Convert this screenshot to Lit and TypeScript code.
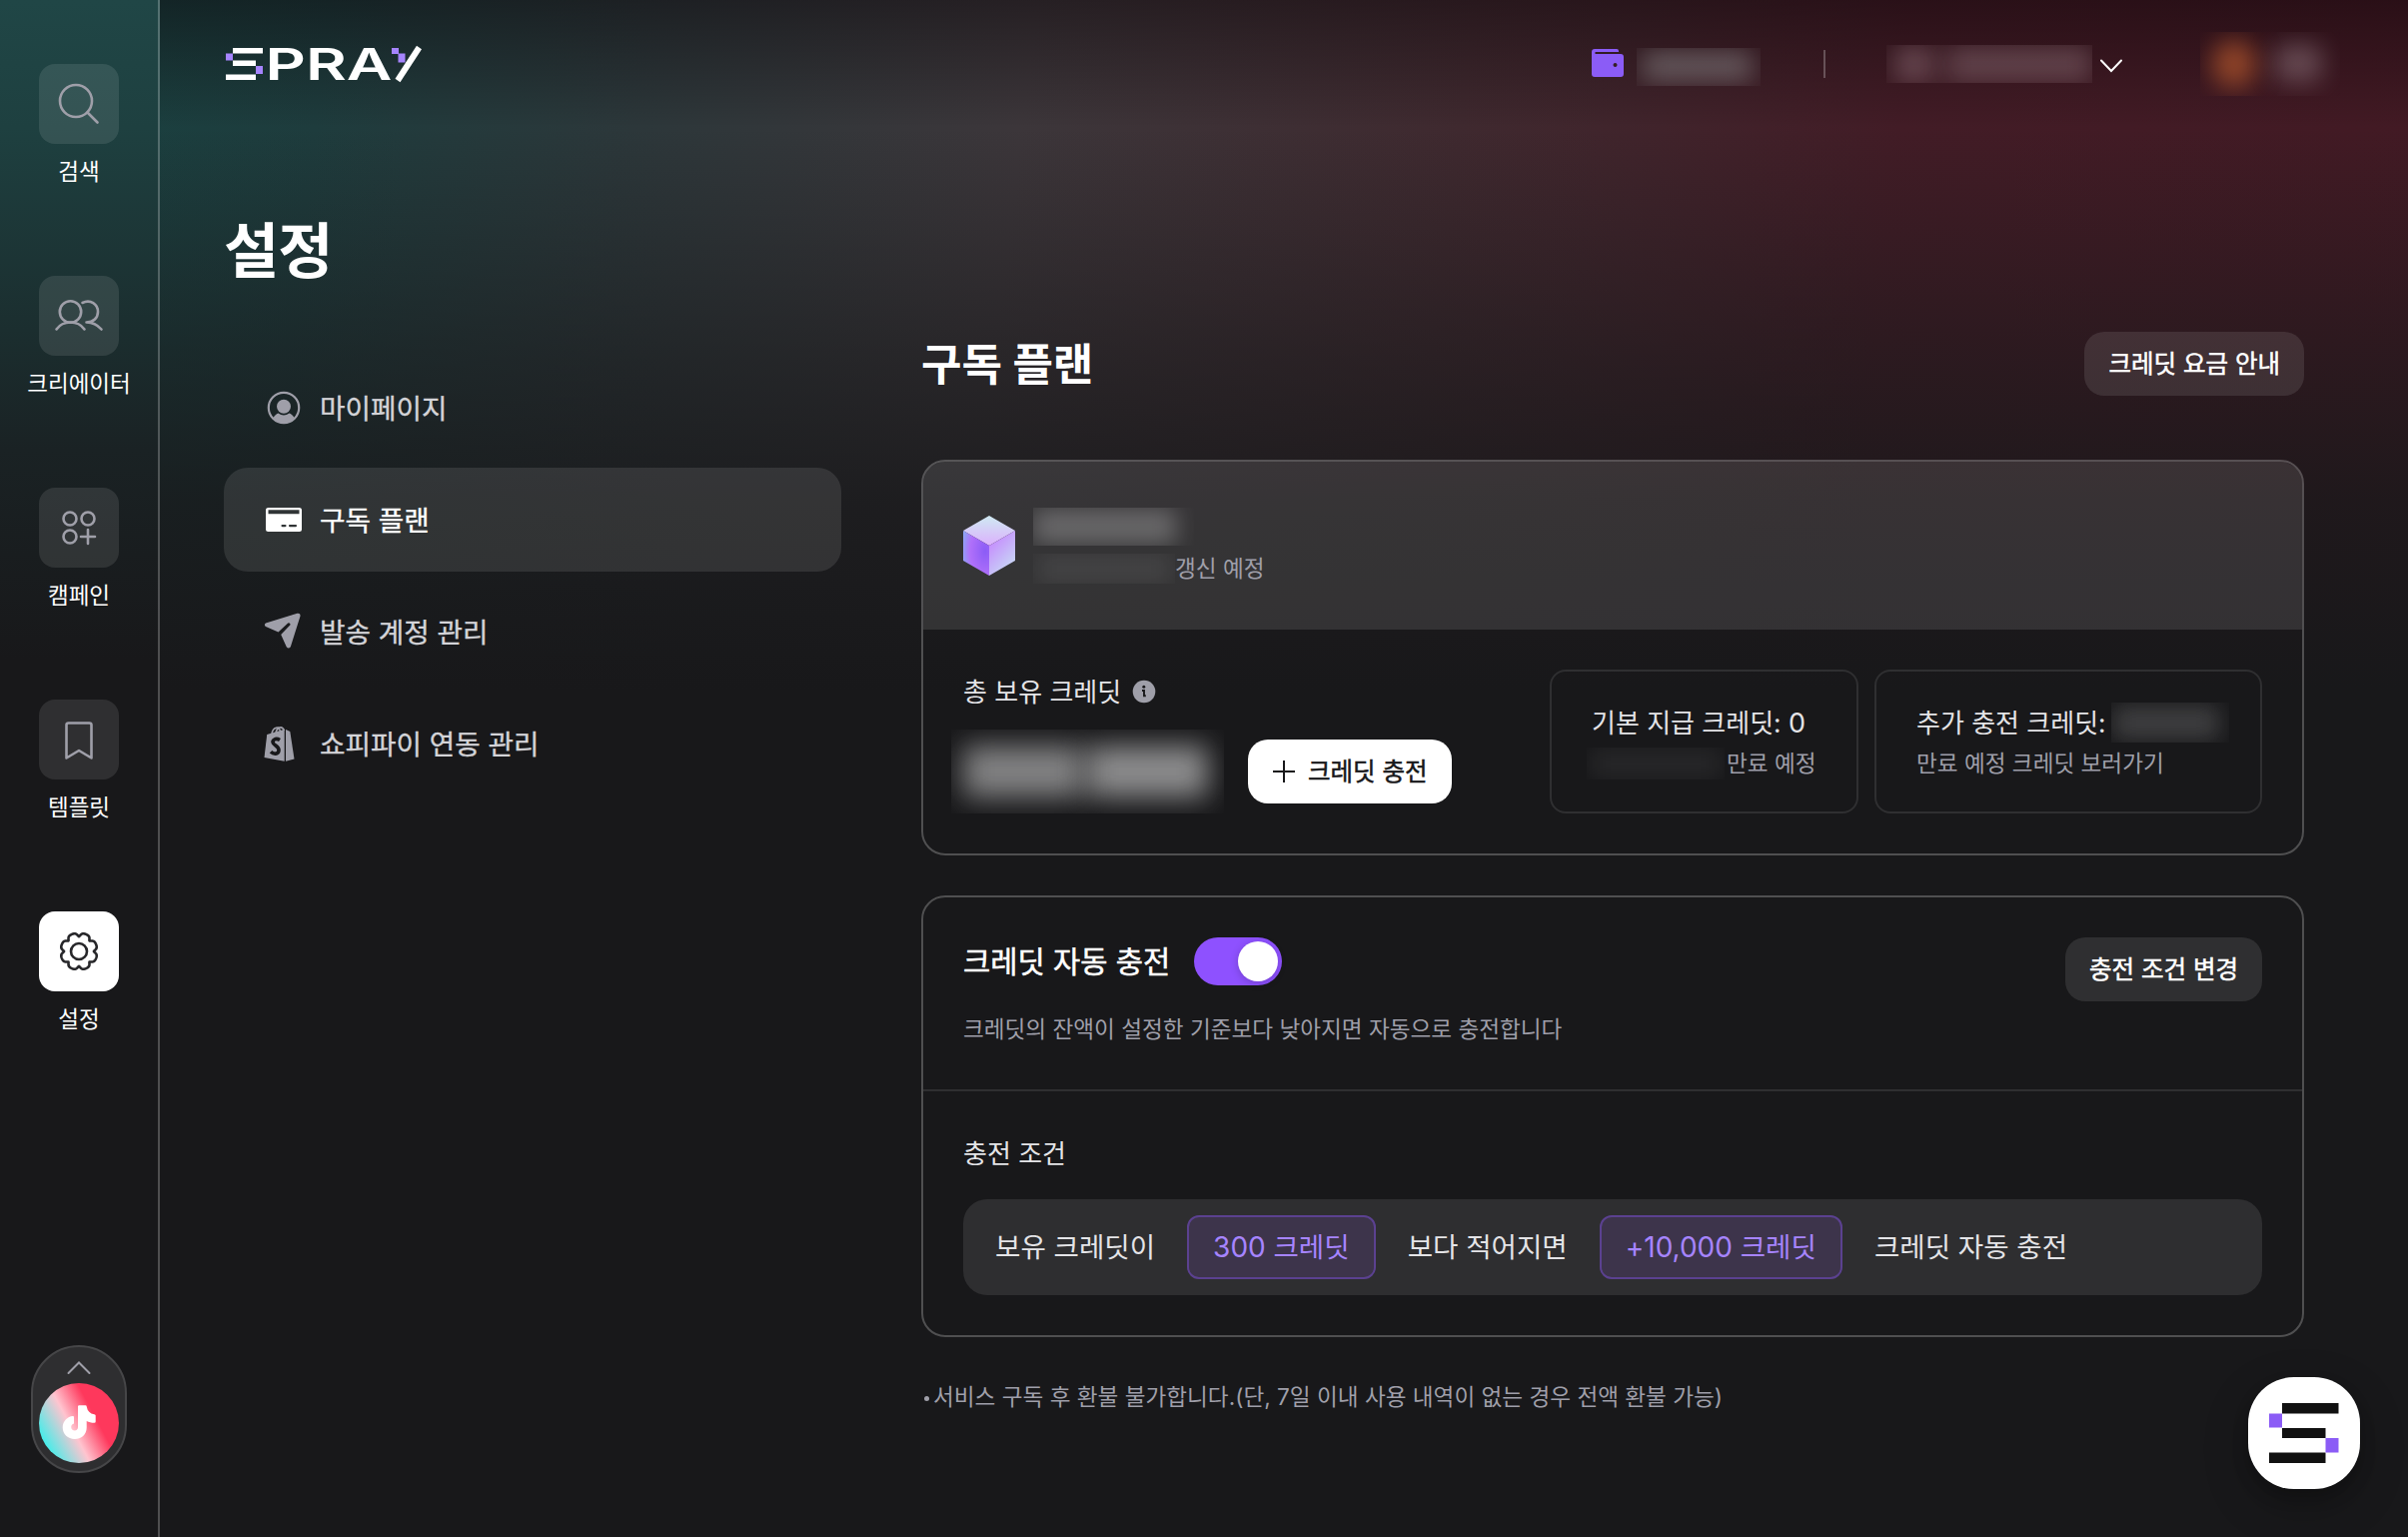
import { LitElement, css, html, svg } from 'lit'
import { customElement, property, state } from 'lit/decorators.js'
import { classMap } from 'lit/directives/class-map.js'

// Outline of the settings gear: eight flat teeth with a rounded notch between them
function gearPoints(cx: number, cy: number) {
  const points: string[] = []
  for (let i = 0; i < 240; i++) {
    const a = (i / 240) * Math.PI * 2
    const tooth = Math.tanh(2 * Math.pow(Math.abs(Math.sin(a * 4)), 1.5)) / Math.tanh(2)
    const r = 14.9 + 3.6 * tooth
    points.push(`${(cx + r * Math.cos(a)).toFixed(2)},${(cy + r * Math.sin(a)).toFixed(2)}`)
  }
  return points.join(' ')
}

const railIcons: Record<string, unknown> = {
  search: svg`
    <circle cx="37" cy="37" r="16" />
    <path d="M48.5 48.5 L58.5 58.5" />`,
  creator: svg`
    <circle cx="31.5" cy="36" r="10.7" />
    <path d="M17.5 53.5 C21 48.5 25.5 46.500 31.5 46.500 C37.500 46.500 42 48.500 45.500 53.500" />
    <path d="M43.500 27 C51.500 23 59 28.500 59 36 C59 42 54.500 46.500 47.500 46.500 C54 46.500 58.500 49 62.500 53.500" />`,
  campaign: svg`
    <circle cx="31" cy="31" r="6.500" />
    <circle cx="49" cy="31" r="6.500" />
    <circle cx="31" cy="49" r="6.500" />
    <path d="M49 42 V56 M42 49 H56" />`,
  template: svg`
    <path d="M27.500 58.500 V25.500 Q27.500 23.500 29.500 23.500 H50.500 Q52.500 23.500 52.500 25.500 V58.500 L40 51 Z" />`,
  settings: svg`
    <polygon points=${gearPoints(40, 40)} />
    <circle cx="40" cy="40" r="8" />`,
}

const menuIcons: Record<string, unknown> = {
  user: svg`
    <circle cx="20" cy="20" r="15.200" fill="none" stroke="currentColor" stroke-width="2.200" />
    <circle cx="20" cy="18.800" r="7" />
    <path d="M9.500 30 C11 27.500 13 26 14.500 25.500 C18 28 22 28 25.500 25.500 C27 26 29 27.500 30.500 30 C28 33.500 24 35.500 20 35.500 C16 35.500 12 33.500 9.500 30 Z" />`,
  card: svg`
    <path fill-rule="evenodd" d="M4.500 8 H35.500 Q38 8 38 10.500 V29.500 Q38 32 35.500 32 H4.500 Q2 32 2 29.500 V10.500 Q2 8 4.500 8 Z M4.500 10.300 V14.300 H35.500 V10.300 Z M18.500 25 a1 1 0 0 0 0 2.200 H21.500 a1 1 0 0 0 0 -2.200 Z M26 25 a1 1 0 0 0 0 2.200 H32 a1 1 0 0 0 0 -2.200 Z" />`,
  send: svg`
    <path d="M2 11.500 L33.500 1.700 Q37 1.200 36.500 4.500 L26.800 35.300 Q24.700 37.800 22.700 35.300 L17.200 23 L26.300 13.500 A1.500 1.500 0 0 0 24.200 11.500 L14.500 20.500 L2 15 Q-0.200 13.200 2 11.500 Z" />`,
  shop: svg`
    <path d="M3.200 11 L20.700 5.700 V37.700 L0.500 34 Z" />
    <path d="M22 6.100 L26.300 8 L30.500 35.500 L22 37.700 Z" />
    <path d="M8 10.500 C9 3.500 16 1.500 16.500 8.500 M12 9.500 C13 4 18 1.500 20.500 7" fill="none" stroke="currentColor" stroke-width="1.600" />
    <path d="M16 16.500 C12 14 7.800 16.500 9.500 19.800 C10.800 22.200 15.500 23 15 27 C14.500 31 9.800 31 7 28.300" fill="none" stroke="#18181a" stroke-width="3.600" />`,
}

@customElement('spray-rail')
export class SprayRail extends LitElement {
  @property() active = 'settings'

  items = [
    { id: 'search', label: '검색' },
    { id: 'creator', label: '크리에이터' },
    { id: 'campaign', label: '캠페인' },
    { id: 'template', label: '템플릿' },
    { id: 'settings', label: '설정' },
  ]

  render() {
    return html`
      <nav class="items">
        ${this.items.map(
          (item) => html`
            <a class=${classMap({ item: true, active: item.id === this.active })}>
              <span class="tile">
                <svg width="80" height="80" viewBox="0 0 80 80">${railIcons[item.id]}</svg>
              </span>
              <span class="label">${item.label}</span>
            </a>
          `
        )}
      </nav>
      <div class="channel">
        <svg class="up" width="24" height="14" viewBox="0 0 24 14">
          <path d="M1.500 12 L12 1.500 L22.500 12" />
        </svg>
        <div class="tiktok">
          <svg width="80" height="80" viewBox="0 0 80 80">
            <path
              d="M39 23.500 Q39 22.300 40.200 22.300 H46.500 Q47.600 22.300 47.800 23.700 C48.500 28 51 30.500 55.300 31.200 Q56.700 31.400 56.700 32.600 V38.500 Q56.700 39.900 55.300 39.800 C52.300 39.700 50 39.200 47.700 38 V44.500 C47.700 51.500 42.300 56 35.800 56 C29 56 23.700 51 23.700 44.500 C23.700 38 28.500 33.300 34 32.900 Q35 32.900 35 34 V40.500 C33.300 41 32.200 42.300 32.200 44 C32.200 46 33.800 47.500 35.700 47.500 C37.700 47.500 39 46 39 44 Z"
            />
          </svg>
        </div>
      </div>
    `
  }

  static styles = css`
    :host {
      display: flex;
      flex-direction: column;
      align-items: center;
      justify-content: space-between;
      box-sizing: border-box;
      width: 160px;
      height: 100%;
      padding: 64px 0;
      border-right: 2px solid rgba(255, 255, 255, 0.24);
      background: linear-gradient(
        180deg,
        #204646 0px,
        #1e4040 128px,
        #1b2e2f 330px,
        #1a2224 450px,
        #18181a 660px
      );
    }
    .items {
      display: flex;
      flex-direction: column;
      gap: 84px;
    }
    .item {
      display: flex;
      flex-direction: column;
      align-items: center;
      gap: 12px;
      height: 128px;
    }
    .tile {
      width: 80px;
      height: 80px;
      flex: none;
      border-radius: 16px;
      background: rgba(255, 255, 255, 0.1);
    }
    .tile svg {
      display: block;
      fill: none;
      stroke: #9f9fa9;
      stroke-width: 2.6;
      stroke-linecap: round;
      stroke-linejoin: round;
    }
    .active .tile {
      background: #fff;
    }
    .active svg {
      stroke: #27272a;
    }
    .label {
      font-size: 22.5px;
      line-height: 32px;
      color: #fff;
      white-space: nowrap;
    }
    .channel {
      display: flex;
      flex-direction: column;
      align-items: center;
      box-sizing: border-box;
      width: 96px;
      height: 128px;
      padding-top: 14px;
      gap: 8px;
      border: 2px solid #464648;
      border-radius: 48px;
      background: #2e2e30;
    }
    .up {
      fill: none;
      stroke: #9f9fa9;
      stroke-width: 2;
      stroke-linecap: round;
    }
    .tiktok {
      width: 80px;
      height: 80px;
      border-radius: 50%;
      background: linear-gradient(62deg, #25f4ee 8%, #ffc4cf 42%, #fe385c 66%);
    }
    .tiktok svg {
      display: block;
      fill: #fff;
    }
  `
}

@customElement('spray-header')
export class SprayHeader extends LitElement {
  render() {
    return html`
      <svg class="logo" width="198" height="74" viewBox="0 -20 198 74">
        <g fill="#fff">
          <rect x="7" y="1" width="30" height="5.500" />
          <rect x="7" y="13.500" width="23" height="5.500" />
          <rect x="0" y="27.500" width="30" height="5.500" />
          <text class="word" x="39.500" y="33" textLength="127" lengthAdjust="spacingAndGlyphs">PRA</text>
        </g>
        <g fill="#a684ff">
          <rect x="0" y="6.500" width="7" height="7" />
          <rect x="30" y="19" width="7" height="8" />
          <rect x="166" y="1" width="7" height="6" />
          <rect x="172.500" y="6.500" width="7" height="9" />
        </g>
        <path d="M172 33.500 L193.500 0.500" stroke="#fff" stroke-width="6" />
      </svg>
      <div class="tools">
        <svg class="wallet" width="32" height="32" viewBox="0 0 32 32">
          <path
            fill-rule="evenodd"
            d="M3 1 H25 Q27 1 27 3 V4 H3.500 V6 H29 Q32 6 32 9 V26 Q32 29 29 29 H3 Q0 29 0 26 V4 Q0 1 3 1 Z M23.500 15 a2 2 0 1 0 0.010 0 Z"
          />
        </svg>
        <span class="masked credit"></span>
        <span class="divider"></span>
        <span class="masked team"></span>
        <svg class="down" width="22" height="14" viewBox="0 0 22 14">
          <path d="M1 1.500 L11 12 L21 1.500" />
        </svg>
        <span class="masked profile"></span>
      </div>
    `
  }

  static styles = css`
    :host {
      display: flex;
      align-items: center;
      justify-content: space-between;
      box-sizing: border-box;
      height: 128px;
      padding: 0 68px 0 66px;
    }
    .word {
      font-family: 'Inter', 'Liberation Sans', sans-serif;
      font-weight: 600;
      font-size: 44px;
    }
    .tools {
      display: flex;
      align-items: center;
    }
    .wallet {
      fill: #8b5cf6;
      margin-right: 13px;
    }
    .masked {
      position: relative;
      overflow: hidden;
    }
    .masked::before,
    .masked::after {
      content: '';
      position: absolute;
      filter: blur(12px);
    }
    .credit {
      width: 124px;
      height: 38px;
      margin: 6px 63px 0 0;
    }
    .credit::before {
      inset: 3px 8px 5px 6px;
      background: rgba(175, 185, 185, 0.38);
    }
    .divider {
      width: 2px;
      height: 28px;
      margin-right: 61px;
      background: rgba(255, 255, 255, 0.25);
    }
    .team {
      width: 206px;
      height: 38px;
      margin-right: 8px;
    }
    .team::before {
      inset: 0 158px 0 8px;
      background: rgba(220, 190, 200, 0.27);
    }
    .team::after {
      inset: 0 0 0 60px;
      background: rgba(220, 190, 200, 0.25);
    }
    .down {
      margin: 4px 78px 0 0;
      fill: none;
      stroke: #fff;
      stroke-width: 2;
      stroke-linecap: round;
    }
    .profile {
      width: 140px;
      height: 64px;
    }
    .profile::before {
      inset: 8px 84px 8px 12px;
      border-radius: 22px;
      background: rgba(160, 76, 42, 0.85);
    }
    .profile::after {
      inset: 12px 18px 14px 74px;
      border-radius: 12px;
      background: rgba(210, 190, 200, 0.3);
    }
  `
}

@customElement('app-root')
export class AppRoot extends LitElement {
  @state() autoCharge = true
  @state() selected = 'card'

  menu = [
    { id: 'user', label: '마이페이지' },
    { id: 'card', label: '구독 플랜' },
    { id: 'send', label: '발송 계정 관리' },
    { id: 'shop', label: '쇼피파이 연동 관리' },
  ]

  renderMenu() {
    return html`
      <nav class="menu">
        ${this.menu.map(
          (item) => html`
            <a
              class=${classMap({ entry: true, selected: item.id === this.selected })}
              @click=${() => (this.selected = item.id)}
            >
              <svg width="40" height="40" viewBox="0 0 40 40">${menuIcons[item.id]}</svg>
              <span>${item.label}</span>
            </a>
          `
        )}
      </nav>
    `
  }

  renderPlan() {
    return html`
      <div class="card">
        <div class="plan">
          <svg width="52" height="60" viewBox="0 0 52 60">
            <defs>
              <linearGradient id="top" x1="0" y1="0" x2="0" y2="1">
                <stop offset="0" stop-color="#cfeaf2" />
                <stop offset="1" stop-color="#dcb0fd" />
              </linearGradient>
              <radialGradient id="left" cx="0.85" cy="0.45" r="0.9">
                <stop offset="0" stop-color="#8b5cf6" />
                <stop offset="0.65" stop-color="#b070fa" />
                <stop offset="1" stop-color="#8fa4f4" />
              </radialGradient>
              <linearGradient id="right" x1="0.2" y1="0" x2="0.8" y2="1">
                <stop offset="0.1" stop-color="#c58bfd" />
                <stop offset="1" stop-color="#c8e0f4" />
              </linearGradient>
            </defs>
            <polygon points="26,0 52,15 26,30 0,15" fill="url(#top)" />
            <polygon points="0,15 26,30 26,60 0,45" fill="url(#left)" />
            <polygon points="52,15 26,30 26,60 52,45" fill="url(#right)" />
          </svg>
          <div class="plan-info">
            <span class="masked plan-name"></span>
            <div class="line">
              <span class="masked plan-date"></span>
              <span class="muted">갱신 예정</span>
            </div>
          </div>
        </div>
        <div class="credits">
          <div class="total">
            <div class="total-label">
              <span>총 보유 크레딧</span>
              <svg width="24" height="24" viewBox="0 0 24 24">
                <circle cx="12" cy="12" r="11.300" fill="#9f9fa9" />
                <circle cx="11.800" cy="7.200" r="1.500" fill="#18181a" />
                <path d="M10 11 H12 V16.300 H13.800" fill="none" stroke="#18181a" stroke-width="1.900" />
              </svg>
            </div>
            <div class="balance-row">
              <span class="masked balance"></span>
              <button class="charge">
                <svg width="24" height="24" viewBox="0 0 24 24">
                  <path d="M12 1 V23 M1 12 H23" stroke="#18181a" stroke-width="2" />
                </svg>
                <span>크레딧 충전</span>
              </button>
            </div>
          </div>
          <div class="boxes">
            <div class="box base">
              <div class="box-title"><span>기본 지급 크레딧: <b>0</b></span></div>
              <div class="line">
                <span class="masked expire"></span>
                <span class="muted">만료 예정</span>
              </div>
            </div>
            <div class="box extra">
              <div class="box-title"><span>추가 충전 크레딧:</span><i class="masked amount"></i></div>
              <div class="muted">만료 예정 크레딧 보러가기</div>
            </div>
          </div>
        </div>
      </div>
    `
  }

  renderAutoCharge() {
    return html`
      <div class="card">
        <div class="auto">
          <div>
            <div class="auto-title">
              <span class="auto-name">크레딧 자동 충전</span>
              <span
                class=${classMap({ toggle: true, on: this.autoCharge })}
                @click=${() => (this.autoCharge = !this.autoCharge)}
              ></span>
            </div>
            <p class="muted auto-text">크레딧의 잔액이 설정한 기준보다 낮아지면 자동으로 충전합니다</p>
          </div>
          <button class="soft"><span>충전 조건 변경</span></button>
        </div>
        <div class="condition">
          <div class="condition-label">충전 조건</div>
          <div class="rule">
            <span>보유 크레딧이</span>
            <span class="chip"><b>300</b> 크레딧</span>
            <span>보다 적어지면</span>
            <span class="chip"><b>+10,000</b> 크레딧</span>
            <span>크레딧 자동 충전</span>
          </div>
        </div>
      </div>
    `
  }

  render() {
    return html`
      <spray-rail active="settings"></spray-rail>
      <main class="main">
        <spray-header></spray-header>
        <h1 class="title">설정</h1>
        <div class="columns">
          ${this.renderMenu()}
          <section class="content">
            <div class="head">
              <h2>구독 플랜</h2>
              <button class="soft"><span>크레딧 요금 안내</span></button>
            </div>
            ${this.renderPlan()} ${this.renderAutoCharge()}
            <p class="note"><i></i>서비스 구독 후 환불 불가합니다.(단, 7일 이내 사용 내역이 없는 경우 전액 환불 가능)</p>
          </section>
        </div>
      </main>
      <button class="fab">
        <svg width="70" height="62" viewBox="0 0 70 62">
          <g fill="#111">
            <rect x="13" y="1" width="56.500" height="10.500" />
            <rect x="13" y="26" width="43.500" height="10" />
            <rect x="0" y="50.500" width="56.500" height="10.500" />
          </g>
          <g fill="#8b5cf6">
            <rect x="0" y="11.500" width="13" height="14" />
            <rect x="56.500" y="36" width="13" height="14.500" />
          </g>
        </svg>
      </button>
    `
  }

  static styles = css`
    :host {
      position: relative;
      display: flex;
      width: 100%;
      height: 1538px;
      overflow: hidden;
      background: #18181a;
      color: #fff;
      font-family: 'Inter', 'Noto Sans CJK KR', sans-serif;
    }
    .main {
      flex: 1;
      min-width: 0;
      background:
        linear-gradient(180deg, rgba(8, 0, 4, 0.42) 0px, rgba(8, 0, 4, 0) 128px),
        linear-gradient(
          180deg,
          rgba(24, 24, 26, 0) 128px,
          rgba(24, 24, 26, 0.52) 350px,
          rgba(24, 24, 26, 0.83) 500px,
          #18181a 690px
        ),
        linear-gradient(
          97deg,
          #1b3f3f 0%,
          #1e3c3d 7%,
          #2c373a 20%,
          #3c363a 36%,
          #3f292f 54%,
          #421c26 72%,
          #421923 100%
        );
    }
    .title {
      margin: 87px 0 45px 64px;
      font-size: 60px;
      line-height: 72px;
      letter-spacing: -1px;
      font-weight: 700;
    }
    .columns {
      display: grid;
      grid-template-columns: 618px 1384px;
      column-gap: 80px;
      padding-left: 64px;
    }
    .menu {
      display: flex;
      flex-direction: column;
      gap: 8px;
      padding-top: 24px;
    }
    .entry {
      display: flex;
      align-items: center;
      gap: 16px;
      box-sizing: border-box;
      height: 104px;
      padding: 0 40px;
      border-radius: 24px;
      font-size: 27.7px;
      color: #d4d4d8;
    }
    .entry span {
      padding-bottom: 3px;
      -webkit-text-stroke: 0.35px currentColor;
    }
    .entry svg {
      fill: currentColor;
      color: #9f9fa9;
    }
    .entry.selected {
      background: rgba(255, 255, 255, 0.1);
      color: #fff;
    }
    .entry.selected svg {
      color: #fff;
    }
    .content {
      display: flex;
      flex-direction: column;
    }
    .head {
      display: flex;
      align-items: center;
      justify-content: space-between;
      margin-bottom: 64px;
    }
    h2 {
      margin: 2px 0 0;
      font-size: 44px;
      line-height: 60px;
      font-weight: 700;
    }
    button {
      display: flex;
      align-items: center;
      height: 64px;
      padding: 0 24px;
      border: 0;
      border-radius: 20px;
      font-family: inherit;
      font-size: 24.5px;
      white-space: nowrap;
    }
    button span {
      padding-bottom: 3px;
      -webkit-text-stroke: 0.5px currentColor;
    }
    .soft {
      background: rgba(255, 255, 255, 0.1);
      color: #fff;
    }
    .card {
      border: 2px solid rgba(255, 255, 255, 0.24);
      border-radius: 24px;
      margin-bottom: 40px;
      overflow: hidden;
    }
    .muted {
      font-size: 22.6px;
      line-height: 32px;
      color: #9f9fa9;
      white-space: nowrap;
    }
    .line {
      display: flex;
      align-items: center;
    }
    .masked {
      display: inline-block;
      position: relative;
      overflow: hidden;
    }
    .masked::before,
    .masked::after {
      content: '';
      position: absolute;
      filter: blur(11px);
    }
    .plan {
      display: flex;
      align-items: center;
      gap: 18px;
      height: 168px;
      padding: 0 40px;
      background: rgba(255, 255, 255, 0.11);
    }
    .plan-info {
      display: flex;
      flex-direction: column;
      gap: 7px;
    }
    .plan-name {
      width: 161px;
      height: 38px;
    }
    .plan-name::before {
      inset: 1px 18px 1px 0;
      background: rgba(255, 255, 255, 0.25);
    }
    .plan-date {
      width: 142px;
      height: 30px;
    }
    .plan-date::before {
      inset: 0 4px;
      background: rgba(255, 255, 255, 0.08);
    }
    .credits {
      display: flex;
      justify-content: space-between;
      padding: 40px;
      height: 144px;
    }
    .total-label {
      display: flex;
      align-items: center;
      gap: 11px;
      height: 44px;
      font-size: 26px;
      color: #e4e4e7;
    }
    .total-label span {
      padding-bottom: 3px;
    }
    .balance-row {
      display: flex;
      align-items: center;
      gap: 24px;
      margin: 16px 0 0 -12px;
    }
    .balance {
      width: 273px;
      height: 84px;
    }
    .balance::before {
      inset: 16px 142px 16px 12px;
      background: rgba(255, 255, 255, 0.46);
      filter: blur(14px);
    }
    .balance::after {
      inset: 16px 16px 16px 136px;
      background: rgba(255, 255, 255, 0.5);
      filter: blur(14px);
    }
    .charge {
      gap: 12px;
      background: #fff;
      color: #18181a;
    }
    .boxes {
      display: flex;
      gap: 16px;
    }
    .box {
      display: flex;
      flex-direction: column;
      justify-content: center;
      gap: 5px;
      box-sizing: border-box;
      height: 144px;
      padding: 0 0 1px 40px;
      border: 2px solid #2f2f31;
      border-radius: 16px;
    }
    .base {
      width: 309px;
    }
    .extra {
      width: 388px;
    }
    .box-title {
      display: flex;
      align-items: center;
      height: 40px;
      font-size: 26px;
      color: #e4e4e7;
      white-space: pre;
    }
    .box-title span {
      padding-bottom: 3px;
    }
    .box-title b {
      font-weight: 400;
      font-size: 27px;
    }
    .expire {
      width: 138px;
      height: 32px;
      margin: 0 2px 0 -5px;
    }
    .expire::before {
      inset: 2px 4px;
      background: rgba(255, 255, 255, 0.07);
    }
    .amount {
      width: 118px;
      height: 40px;
      margin-left: 5px;
    }
    .amount::before {
      inset: 3px 10px 3px 2px;
      background: rgba(255, 255, 255, 0.17);
    }
    .auto {
      display: flex;
      align-items: flex-start;
      justify-content: space-between;
      box-sizing: border-box;
      height: 194px;
      padding: 40px;
      border-bottom: 2px solid #2f2f31;
    }
    .auto-title {
      display: flex;
      align-items: center;
      gap: 24px;
      height: 48px;
      font-size: 29.6px;
    }
    .auto-name {
      padding-bottom: 4px;
      -webkit-text-stroke: 0.5px currentColor;
    }
    .toggle {
      box-sizing: border-box;
      width: 88px;
      height: 48px;
      padding: 4px;
      border-radius: 24px;
      background: #464648;
    }
    .toggle::before {
      content: '';
      display: block;
      width: 40px;
      height: 40px;
      border-radius: 50%;
      background: #fff;
      box-shadow: 0 2px 8px rgba(0, 0, 0, 0.2);
    }
    .toggle.on {
      padding-left: 44px;
      background: #8e51ff;
    }
    .auto-text {
      margin: 28px 0 0;
    }
    .condition {
      padding: 40px;
    }
    .condition-label {
      height: 44px;
      font-size: 26px;
      line-height: 46px;
      color: #e4e4e7;
    }
    .rule {
      display: flex;
      align-items: center;
      gap: 32px;
      height: 96px;
      margin-top: 24px;
      padding: 0 32px;
      border-radius: 24px;
      background: #2e2e30;
      font-size: 27.6px;
      line-height: 60px;
      color: #e4e4e7;
      white-space: nowrap;
    }
    .chip {
      box-sizing: border-box;
      height: 64px;
      padding: 0 24px;
      border: 2px solid #5b4190;
      border-radius: 12px;
      background: #3d344b;
      color: #a684ff;
    }
    .chip b {
      font-weight: 400;
      font-size: 28px;
    }
    .note {
      display: flex;
      align-items: center;
      margin: 2px 0 0 3px;
      font-size: 22.6px;
      line-height: 36px;
      color: #9f9fa9;
      white-space: nowrap;
    }
    .note i {
      width: 5px;
      height: 5px;
      margin: 2px 4px 0 0;
      border-radius: 50%;
      background: #9f9fa9;
    }
    .fab {
      position: absolute;
      right: 48px;
      bottom: 48px;
      justify-content: center;
      width: 112px;
      height: 112px;
      padding: 0;
      border-radius: 46px;
      background: #fff;
      box-shadow:
        0 8px 16px rgba(0, 0, 0, 0.2),
        0 16px 48px rgba(0, 0, 0, 0.2);
    }
  `
}
